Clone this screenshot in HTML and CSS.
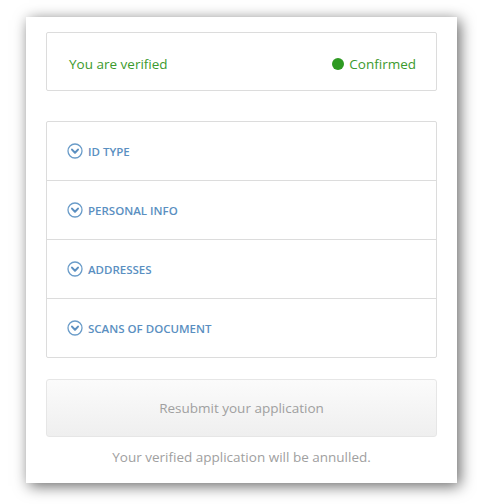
FILE: index.html
```html
<!DOCTYPE html>
<html>
<head>
<meta charset="utf-8">
<link rel="stylesheet" href="styles.css">
</head>
<body>
<div class="panel">
  <div class="status">
    <span class="status-label">You are verified</span>
    <span class="status-badge"><span class="dot"></span>Confirmed</span>
  </div>
  <div class="accordion">
    <div class="acc-row"><svg class="chev" viewBox="0 0 16 16"><circle cx="8" cy="8" r="7" fill="none" stroke="#6a9cc9" stroke-width="1.3"/><path d="M5 6.6 L8 9.8 L11 6.6" fill="none" stroke="#5b8fc0" stroke-width="2" stroke-linecap="round" stroke-linejoin="round"/></svg><span>ID TYPE</span></div>
    <div class="acc-row"><svg class="chev" viewBox="0 0 16 16"><circle cx="8" cy="8" r="7" fill="none" stroke="#6a9cc9" stroke-width="1.3"/><path d="M5 6.6 L8 9.8 L11 6.6" fill="none" stroke="#5b8fc0" stroke-width="2" stroke-linecap="round" stroke-linejoin="round"/></svg><span>PERSONAL INFO</span></div>
    <div class="acc-row"><svg class="chev" viewBox="0 0 16 16"><circle cx="8" cy="8" r="7" fill="none" stroke="#6a9cc9" stroke-width="1.3"/><path d="M5 6.6 L8 9.8 L11 6.6" fill="none" stroke="#5b8fc0" stroke-width="2" stroke-linecap="round" stroke-linejoin="round"/></svg><span>ADDRESSES</span></div>
    <div class="acc-row"><svg class="chev" viewBox="0 0 16 16"><circle cx="8" cy="8" r="7" fill="none" stroke="#6a9cc9" stroke-width="1.3"/><path d="M5 6.6 L8 9.8 L11 6.6" fill="none" stroke="#5b8fc0" stroke-width="2" stroke-linecap="round" stroke-linejoin="round"/></svg><span>SCANS OF DOCUMENT</span></div>
  </div>
  <div class="resubmit">Resubmit your application</div>
  <p class="note">Your verified application will be annulled.</p>
</div>
</body>
</html>
```

FILE: styles.css
```css
* { box-sizing: border-box; }
html, body { margin: 0; padding: 0; background: #fff; }
body { font-family: "Open Sans", "Liberation Sans", sans-serif; padding-bottom: 21px; }

.panel {
  margin: 17px 0 0 26px;
  width: 431px;
  height: 466px;
  background: #fff;
  box-shadow: 3px 3px 14px rgba(0,0,0,0.6);
  padding: 15px 20px 0 20px;
  display: flex;
  flex-direction: column;
}

.status {
  height: 59px;
  border: 1px solid #dcdcdc;
  border-radius: 2px;
  display: flex;
  align-items: center;
  justify-content: space-between;
  padding: 4px 20px 0 22px;
  color: #3c9a2d;
  font-size: 13.5px;
}
.status-badge { display: flex; align-items: center; gap: 5px; }
.dot { width: 12px; height: 12px; border-radius: 50%; background: #2e9a22; }

.accordion {
  margin-top: 30px;
  border: 1px solid #dcdcdc;
  border-radius: 2px;
  display: flex;
  flex-direction: column;
}
.acc-row {
  height: 59px;
  display: flex;
  align-items: center;
  gap: 5px;
  padding-left: 20px;
  border-top: 1px solid #dcdcdc;
  color: #5a8fc1;
  font-size: 11.5px;
  font-weight: 600;
}
.acc-row:first-child { border-top: none; height: 58px; }
.chev { width: 16px; height: 16px; }

.resubmit {
  margin-top: 21px;
  height: 58px;
  border: 1px solid #e6e6e6;
  border-radius: 3px;
  background: linear-gradient(#fbfbfb, #efefef);
  display: flex;
  align-items: center;
  justify-content: center;
  color: #a0a0a0;
  font-size: 13.5px;
}

.note {
  margin: 11px 0 0;
  text-align: center;
  color: #a0a0a0;
  font-size: 13.5px;
}
```
